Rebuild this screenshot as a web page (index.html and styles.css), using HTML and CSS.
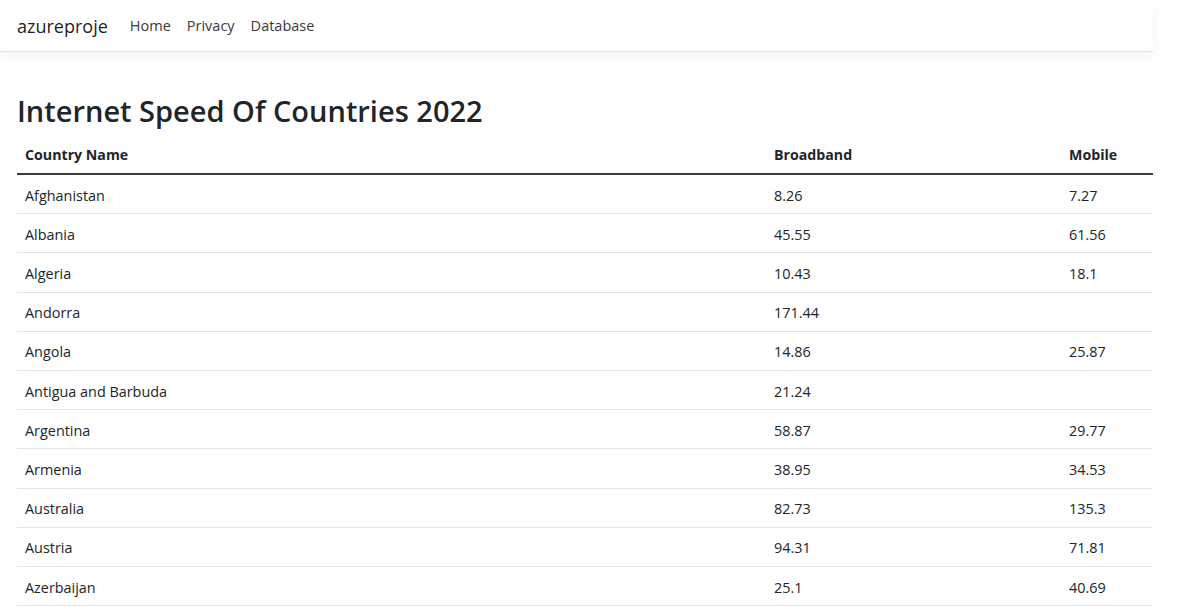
FILE: index.html
```html
<!DOCTYPE html>
<html lang="en">
<head>
<meta charset="utf-8">
<title>Internet Speed Of Countries 2022</title>
<link rel="stylesheet" href="styles.css">
</head>
<body>
<div class="page">
  <header class="navbar">
    <a class="brand" href="#">azureproje</a>
    <nav class="nav">
      <a class="nav-link" href="#">Home</a>
      <a class="nav-link" href="#">Privacy</a>
      <a class="nav-link" href="#">Database</a>
    </nav>
  </header>
  <main class="main">
    <h1 class="title">Internet Speed Of Countries 2022</h1>
    <table class="table">
      <thead>
        <tr><th class="c1">Country Name</th><th class="c2">Broadband</th><th class="c3">Mobile</th></tr>
      </thead>
      <tbody>
        <tr><td>Afghanistan</td><td>8.26</td><td>7.27</td></tr>
        <tr><td>Albania</td><td>45.55</td><td>61.56</td></tr>
        <tr><td>Algeria</td><td>10.43</td><td>18.1</td></tr>
        <tr><td>Andorra</td><td>171.44</td><td></td></tr>
        <tr><td>Angola</td><td>14.86</td><td>25.87</td></tr>
        <tr><td>Antigua and Barbuda</td><td>21.24</td><td></td></tr>
        <tr><td>Argentina</td><td>58.87</td><td>29.77</td></tr>
        <tr><td>Armenia</td><td>38.95</td><td>34.53</td></tr>
        <tr><td>Australia</td><td>82.73</td><td>135.3</td></tr>
        <tr><td>Austria</td><td>94.31</td><td>71.81</td></tr>
        <tr><td>Azerbaijan</td><td>25.1</td><td>40.69</td></tr>
      </tbody>
    </table>
  </main>
</div>
</body>
</html>
```

FILE: styles.css
```css
html, body {
  margin: 0;
  padding: 0;
  background: #fff;
}
body {
  font-family: "Open Sans", "Noto Sans", sans-serif;
  color: #212529;
  overflow: hidden;
}
.page {
  width: 1153px;
}
.navbar {
  display: flex;
  align-items: center;
  height: 52px;
  box-sizing: border-box;
  padding: 0 17px;
  border-bottom: 1px solid #e3e3e8;
  box-shadow: 0 4px 12px rgba(0, 0, 0, 0.05);
}
.brand {
  font-size: 18px;
  color: rgba(0, 0, 0, 0.9);
  text-decoration: none;
  margin-right: 14px;
}
.nav {
  display: flex;
}
.nav-link {
  font-size: 14.5px;
  color: #3a3a3a;
  text-decoration: none;
  padding: 0 8px;
}
.main {
  padding: 41px 0 0 17px;
}
.title {
  margin: 0 0 8px 0;
  font-size: 29px;
  font-weight: 600;
  line-height: 36px;
}
.table {
  width: 1136px;
  border-collapse: collapse;
  font-size: 14.4px;
}
.table th {
  text-align: left;
  font-weight: 700;
  font-size: 14.2px;
  padding: 7px 8px;
  line-height: 22px;
  border-bottom: 2px solid #3b3b3b;
}
.c1 { width: 733px; }
.c2 { width: 279px; }
.table td {
  padding: 9.5px 8px 6.5px;
  line-height: 22.2px;
  border-bottom: 1px solid #e6e6e6;
}
```
